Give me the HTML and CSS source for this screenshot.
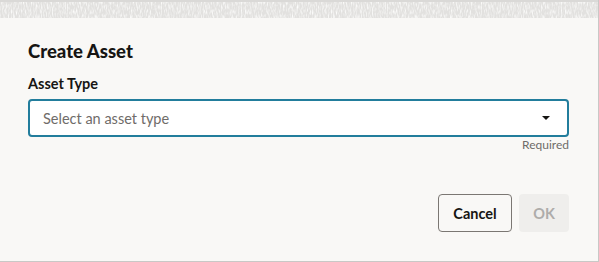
FILE: index.html
```html
<!DOCTYPE HTML>
<html>
<head>
  <title>Create Asset</title>
  <meta charset="utf-8">
  <link rel="stylesheet" href="styles.css">
</head>
<body>
  <div class="dialog">
    <svg class="topStrip" width="598" height="18" xmlns="http://www.w3.org/2000/svg">
      <filter id="grain" x="0" y="0" width="100%" height="100%">
        <feTurbulence type="fractalNoise" baseFrequency="0.8 0.2" numOctaves="2" seed="4"/>
        <feColorMatrix type="matrix" values="0 0 0 0 0.97  0 0 0 0 0.97  0 0 0 0 0.96  0 0 0 2.2 -0.9"/>
      </filter>
      <rect width="598" height="18" fill="#e2e1df"/>
      <rect width="598" height="18" filter="url(#grain)"/>
      <rect width="598" height="2" fill="#dad9d7"/>
    </svg>
    <div class="content">
      <h1 class="title">Create Asset</h1>
      <label class="fieldLabel" for="assetType">Asset Type</label>
      <div class="selectBox" id="assetType">
        <span class="placeholder">Select an asset type</span>
        <span class="arrow"></span>
      </div>
      <div class="helpText">Required</div>
      <div class="footer">
        <button class="btn btnCancel">Cancel</button>
        <button class="btn btnOk" disabled>OK</button>
      </div>
    </div>
  </div>
</body>
</html>
```

FILE: styles.css
```css
body {
  margin: 0;
  background-color: #f9f8f6;
  font-family: Lato, "Noto Sans", sans-serif;
  color: #161513;
}

.dialog {
  width: 598px;
  height: 261px;
  background-color: #f9f8f6;
  border-right: 1px solid #c9c8c6;
  border-bottom: 1px solid #c9c8c6;
}

.topStrip {
  display: block;
}

.content {
  padding: 21px 29px 0 28px;
  display: flex;
  flex-direction: column;
}

.title {
  margin: 0;
  font-size: 18.5px;
  line-height: 24px;
  font-weight: 900;
}

.fieldLabel {
  margin-top: 11px;
  font-size: 14.5px;
  line-height: 20px;
  font-weight: 700;
}

.selectBox {
  margin-top: 5px;
  height: 34px;
  border: 2px solid #227d9c;
  border-radius: 4px;
  background-color: #fff;
  display: flex;
  align-items: center;
  justify-content: space-between;
  padding: 0 17px 0 13px;
}

.placeholder {
  font-size: 14.5px;
  color: #6f6c69;
}

.arrow {
  width: 0;
  height: 0;
  border-left: 4px solid transparent;
  border-right: 4px solid transparent;
  border-top: 4px solid #161513;
}

.helpText {
  text-align: right;
  font-size: 12px;
  line-height: 16px;
  color: #6f6c69;
}

.footer {
  margin-top: 41px;
  display: flex;
  justify-content: flex-end;
  gap: 7px;
}

.btn {
  height: 38px;
  border-radius: 4px;
  font-family: Lato, "Noto Sans", sans-serif;
  font-size: 14.5px;
  font-weight: 700;
  padding: 0;
}

.btnCancel {
  width: 74px;
  border: 1px solid #7b7773;
  background-color: #f9f8f6;
  color: #161513;
}

.btnOk {
  width: 50px;
  border: none;
  background-color: #efeeec;
  color: #aeacaa;
}
```
